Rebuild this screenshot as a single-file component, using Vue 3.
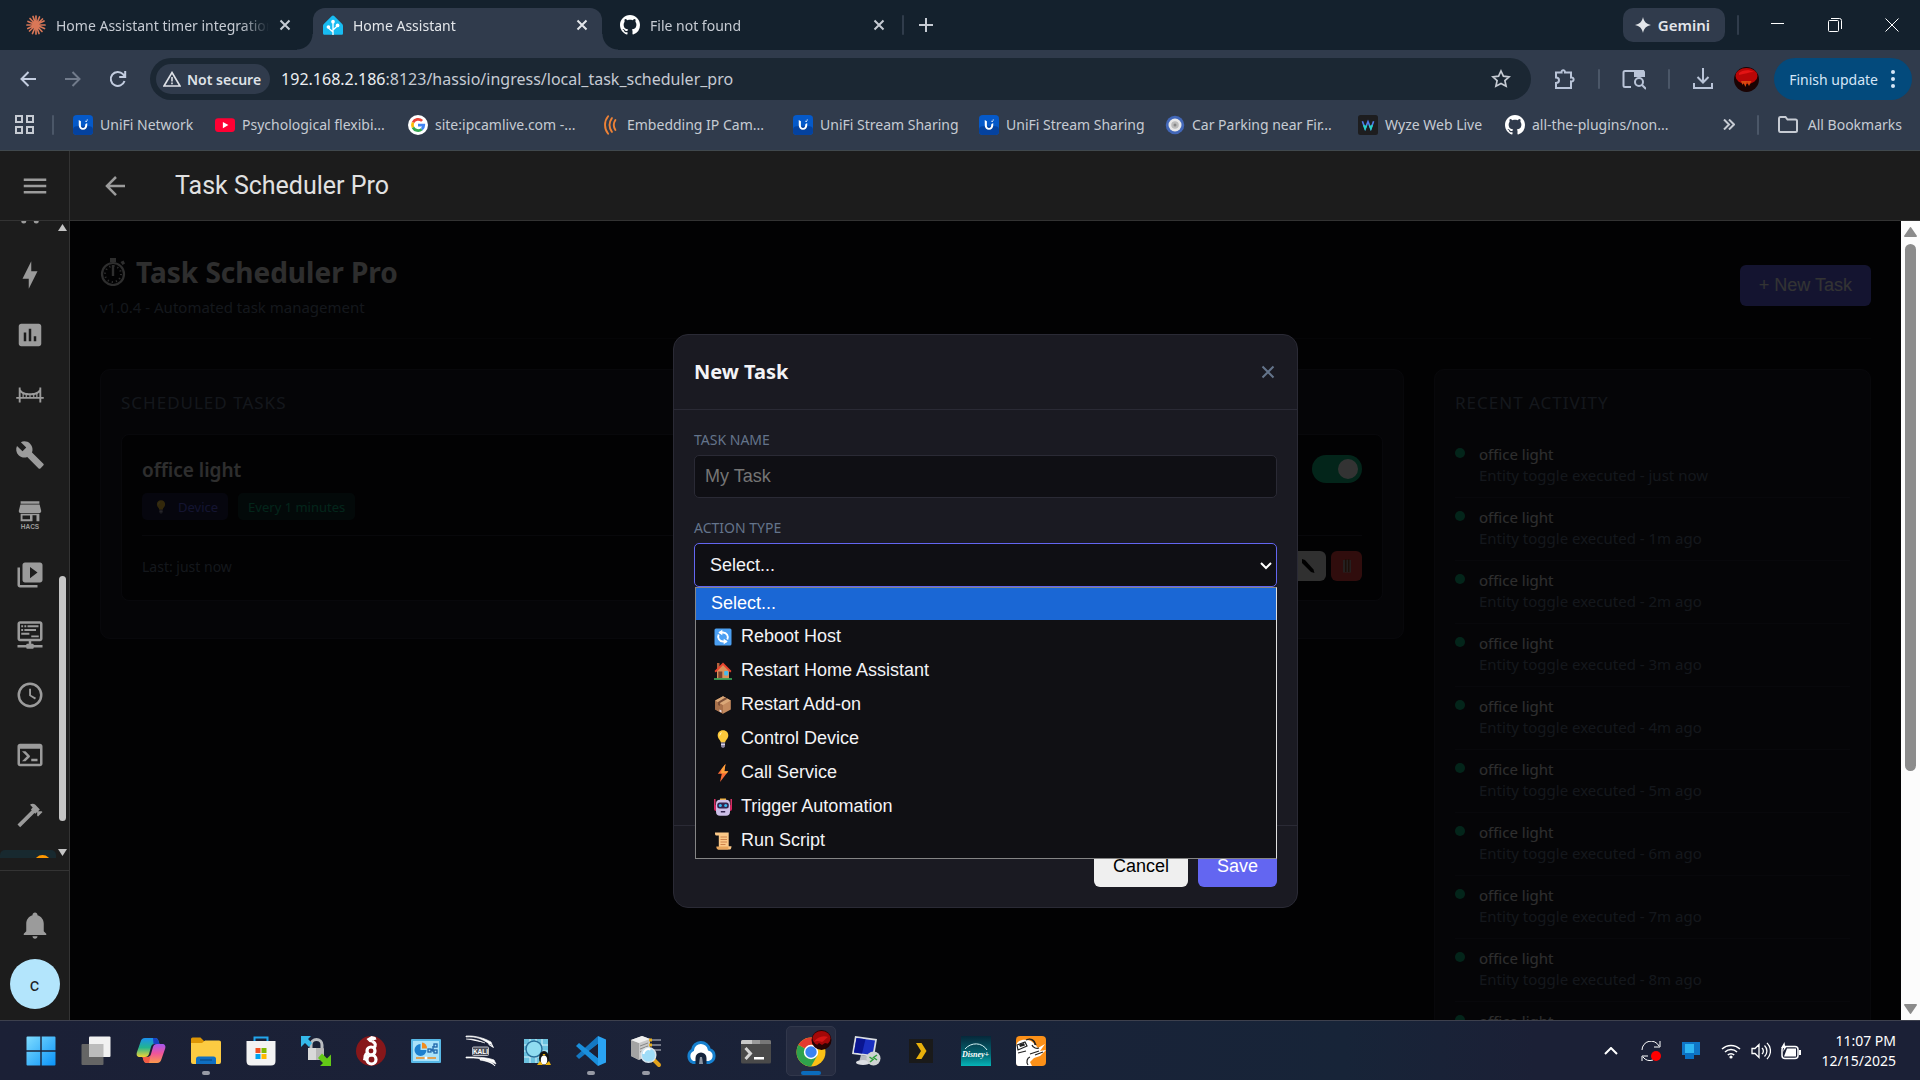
<script setup>
import { ref } from 'vue'

const github = '<path fill="#fff" d="M8 0C3.58 0 0 3.58 0 8c0 3.54 2.29 6.53 5.47 7.59.4.07.55-.17.55-.38 0-.19-.01-.82-.01-1.49-2.01.37-2.53-.49-2.69-.94-.09-.23-.48-.94-.82-1.13-.28-.15-.68-.52-.01-.53.63-.01 1.08.58 1.23.82.72 1.21 1.87.87 2.33.66.07-.52.28-.87.51-1.07-1.78-.2-3.64-.89-3.64-3.95 0-.87.31-1.59.82-2.15-.08-.2-.36-1.02.08-2.12 0 0 .67-.21 2.2.82.64-.18 1.32-.27 2-.27.68 0 1.36.09 2 .27 1.53-1.04 2.2-.82 2.2-.82.44 1.1.16 1.92.08 2.12.51.56.82 1.27.82 2.15 0 3.07-1.87 3.75-3.65 3.95.29.25.54.73.54 1.48 0 1.07-.01 1.93-.01 2.2 0 .21.15.46.55.38A8.013 8.013 0 0 0 16 8c0-4.42-3.58-8-8-8z"/>'
const unifi = '<rect width="16" height="16" rx="3" fill="#0559c9"/><rect y="9" width="16" height="7" rx="3" fill="#04429f"/><path d="M4.6 4v4.2c0 2.2 1.4 3.6 3.4 3.6s3.4-1.4 3.4-3.6V6.6c-1.3.2-1.7.9-1.7 2 0 1-.6 1.7-1.7 1.7S6.3 9.500 6.300 8.300V5z" fill="#fff"/><path d="M10 4.500h1v1h-1zM11 3.500h.8v.8H11z" fill="#fff"/>'

const tabs = [
    { title: 'Home Assistant timer integration', view: '0 0 20 20', icon: '<g stroke="#d97757" stroke-width="1.700" stroke-linecap="round"><path d="M10 1v18M1 10h18M4 3.500l12 13M16.500 4l-13 12M7 1.500l6 17M13.500 2l-7 16.500M2 6.500l16.500 7M18 6L1.800 13.500"/></g>' },
    { title: 'Home Assistant', active: true, view: '0 0 24 24', icon: '<path fill="#18bcf2" d="M12 0.500c.5 0 1 .2 1.400.6L23 10.800c.5.500 1 1.500 1 2.300v9c0 1-.7 1.700-1.700 1.700H1.700C.7 23.800 0 23 0 22v-9c0-.8.5-1.800 1-2.300l9.600-9.600c.4-.4.9-.6 1.400-.6z"/><g fill="none" stroke="#fff" stroke-width="1.600"><path d="M12 24V9M12 20.500l-5.500-5M12 18l5.500-5"/></g><circle cx="12" cy="8" r="2.200" fill="#fff"/><circle cx="6.500" cy="14.500" r="2.200" fill="#fff"/><circle cx="17.500" cy="12.500" r="2.200" fill="#fff"/>' },
    { title: 'File not found', view: '0 0 16 16', icon: github }
]

const bookmarks = [
    { title: 'UniFi Network', w: 142, icon: unifi },
    { title: 'Psychological flexibi...', w: 193, icon: '<rect y="2.500" width="16" height="11" rx="2.500" fill="#ff0033"/><path d="M6.300 5.500v5L10.700 8z" fill="#fff"/>' },
    { title: 'site:ipcamlive.com -...', w: 192, icon: '<circle cx="8" cy="8" r="8" fill="#fff"/><g fill="none" stroke-width="2.200"><path stroke="#ea4335" d="M4 6a4.600 4.600 0 0 1 7.300-1.300"/><path stroke="#fbbc05" d="M4 10a4.600 4.600 0 0 1 0-4"/><path stroke="#34a853" d="M11 11.400A4.600 4.600 0 0 1 4 10"/><path stroke="#4285f4" d="M8 8h4.600c0 1.500-.6 2.700-1.600 3.400"/></g>' },
    { title: 'Embedding IP Cam...', w: 193, icon: '<g fill="none" stroke="#ee8236" stroke-width="1.500" stroke-linecap="round"><path d="M6.500 1C3.200 5 3.200 11 6.500 15M9.500 2.500c-2.400 3.500-2.400 7.500 0 11M12.300 4c-1.600 2.500-1.600 5.500 0 8"/></g>' },
    { title: 'UniFi Stream Sharing', w: 186, icon: unifi },
    { title: 'UniFi Stream Sharing', w: 186, icon: unifi },
    { title: 'Car Parking near Fir...', w: 193, icon: '<circle cx="8" cy="8" r="7.400" fill="#4267b8"/><circle cx="8" cy="8" r="5.200" fill="#e8e8e8"/><circle cx="8" cy="8" r="3" fill="#bcbcbc"/><circle cx="8" cy="8" r="1.200" fill="#888"/>' },
    { title: 'Wyze Web Live', w: 147, icon: '<rect width="16" height="16" rx="2" fill="#1d1d1f"/><path d="M3.500 5l2.200 6L8 5.300 10.300 11l2.200-6" fill="none" stroke="#4f7bea" stroke-width="1.300"/><path d="M4.600 8l1.100 3 1.100-2.800M9.200 8.200l1.100 2.800 1.100-3" fill="none" stroke="#25d3c4" stroke-width="1.300"/>' },
    { title: 'all-the-plugins/non...', w: 180, icon: github }
]

const navItems = [
    '<path d="M17 18a2 2 0 1 0 0 4 2 2 0 0 0 0-4M7 18a2 2 0 1 0 0 4 2 2 0 0 0 0-4M1 2v2h2l3.600 7.600-1.400 2.400C4.500 15.300 5.500 17 7 17h12v-2H7.400l1.100-2h7.500L21 4H5.200l-.9-2z"/>',
    '<path d="M11 15H6L13 1V9H18L11 23V15Z"/>',
    '<path d="M9 17H7V10H9V17M13 17H11V7H13V17M17 17H15V13H17V17M19 3H5C3.9 3 3 3.9 3 5V19C3 20.1 3.9 21 5 21H19C20.1 21 21 20.1 21 19V5C21 3.9 20.1 3 19 3"/>',
    '<path d="M3 6h1.500v1.500C6 10 9 10.500 12 10.500s6-.5 7.500-3V6H21v7.500h2V15h-2v3h-1.500v-3h-15v3H3v-3H1v-1.500h2zM4.500 10v3.500H6V11.200zM7 11.600v1.900h1.500V12zM9.500 12.100v1.400h2v-1.400zM12.500 12.100v1.400h2v-1.400zM15.500 12v1.500H17v-1.900zM18 11.200v2.300h1.500V10z" fill-rule="evenodd"/>',
    '<path d="M22.7 19L13.6 9.9C14.5 7.6 14 4.9 12.1 3C10.1 1 7.1 .6 4.7 1.7L9 6L6 9L1.6 4.7C.4 7.1 .9 10.1 2.9 12.1C4.8 14 7.5 14.5 9.8 13.6L18.9 22.7C19.3 23.1 19.9 23.1 20.3 22.7L22.6 20.4C23.1 20 23.1 19.3 22.7 19Z"/>',
    '<path d="M4.500 1h15v2h-15zM4.300 3.600h15.400l1.300 5.200c0 1-.8 1.700-1.500 1.700h-15c-.8 0-1.500-.7-1.500-1.700zM4.500 11h15v6h-2.300v-4.800h-3.200V17H4.500zM6 12.300v3h6v-3z" fill-rule="evenodd"/><text x="12" y="22.800" font-size="5.200" font-weight="700" text-anchor="middle" font-family="Liberation Sans, sans-serif">HACS</text>',
    '<path d="M4 6H2V20C2 21.11 2.9 22 4 22H18V20H4V6M20 2H8C6.9 2 6 2.9 6 4V16C6 17.1 6.9 18 8 18H20C21.1 18 22 17.1 22 16V4C22 2.9 21.1 2 20 2M12 14.500V5.500L18 10L12 14.500Z"/>',
    '<path d="M4 1h16c1.100 0 2 .9 2 2v12c0 1.100-.9 2-2 2h-7v2h1c.6 0 1 .4 1 1h7v2h-7c0 .6-.4 1-1 1h-4c-.6 0-1-.4-1-1H2v-2h7c0-.6.4-1 1-1h1v-2H4c-1.100 0-2-.9-2-2V3c0-1.100.9-2 2-2M4 3v12h16V3zM5 4.200h1.500v1.500H5zM7.500 4.200H9v1.500H7.500zM10 4.200h8.800v1.500H10zM5 7.200h1.500v1.500H5zM7.500 7.200h9.300v1.500H7.500zM5 10.200h6.500v1.500H5zM13 12.300h6v1.500h-6z" fill-rule="evenodd"/>',
    '<path d="M12 2a10 10 0 1 0 0 20 10 10 0 0 0 0-20m0 2a8 8 0 1 1 0 16 8 8 0 0 1 0-16m-.7 3v5.600l4.700 2.900.8-1.300-4-2.300V7z"/>',
    '<path d="M20 19V7H4V19H20M20 3C21.11 3 22 3.9 22 5V19C22 20.11 21.11 21 20 21H4C2.9 21 2 20.1 2 19V5C2 3.89 2.9 3 4 3H20M13 17V15H18V17H13M9.58 13L5.57 9H8.4L11.7 12.3C12.09 12.69 12.09 13.33 11.7 13.72L8.42 17H5.59L9.58 13Z"/>',
    '<path d="M2 19.63L13.43 8.2L12.72 7.5L14.14 6.07L12 3.89C13.2 2.7 15.09 2.7 16.27 3.89L19.87 7.5L18.45 8.91H21.29L22 9.62L18.45 13.21L17.74 12.5V9.62L16.27 11.04L15.56 10.33L4.13 21.76L2 19.63Z"/>'
]

const bulb = '<path d="M9 .3C5.600.300 3.700 2.700 3.700 5.500c0 3.200 2.800 4.500 3.100 7h4.400c.3-2.500 3.100-3.800 3.100-7C14.300 2.700 12.400.300 9 .3z" fill="#fcc93b"/><path d="M8 2C6 2.500 5.200 4.500 5.700 6.300 6.500 5 7 3.500 8 2z" fill="#fff6c4"/><path d="M7 12.500h4v3.700c0 .8-1 1.500-2 1.500s-2-.7-2-1.500z" fill="#8c86a3"/><path d="M7 14h4v1H7z" fill="#d6d1e6"/>'

const options = [
    { label: 'Reboot Host', icon: '<rect x=".5" y=".5" width="17" height="17" rx="1.500" fill="#4b9ff2"/><path d="M13.300 11.500A4.800 4.800 0 0 0 9 4.500H5.500M4.700 6.500A4.800 4.800 0 0 0 9 13.500h3.500" fill="none" stroke="#fff" stroke-width="1.900"/><path d="M8.300 1.800v5.400L4.300 4.500zM9.700 10.800v5.400l4-2.700z" fill="#fff"/>' },
    { label: 'Restart Home Assistant', icon: '<path d="M3 1h2.500v6H3z" fill="#b5603c"/><path d="M3 8l6-6 6 6v8.500H3z" fill="#d9925a"/><path d="M.5 9L9 .5 17.500 9l-1.300 1.400L9 3.300l-7.200 7.100z" fill="#e8442e"/><rect x="4.300" y="9.500" width="4" height="7" fill="#7a4030"/><rect x="10.200" y="9" width="4" height="4.500" rx="1" fill="#45b9ee"/><rect y="16.200" width="18" height="1.600" fill="#3fae5c"/>' },
    { label: 'Restart Add-on', icon: '<path d="M9 .3l7.800 4.200v9L9 17.700l-7.800-4.200v-9z" fill="#c48a5e"/><path d="M9 9v8.700l-7.800-4.200v-9z" fill="#a8704a"/><path d="M9 .3l7.800 4.200L9 9 1.200 4.500z" fill="#dba878"/><path d="M11.300 1.600L4 6v3l2 1V7l7.500-4.200z" fill="#7d5038"/><path d="M5.500 13.500l2 1v2l-2-1z" fill="#e8e0ee"/>' },
    { label: 'Control Device', icon: bulb },
    { label: 'Call Service', icon: '<path d="M11.500 0L3.800 9.700h4L6 18l8.300-10.700h-4z" fill="#f96b35"/><path d="M11.500 0L7.600 5 7 9.200h5.800l1.500-1.900h-4z" fill="#fca23a"/>' },
    { label: 'Trigger Automation', icon: '<path d="M.8 1v10M17.200 1v10" stroke="#e8356d" stroke-width="1.400"/><rect x="0" y="7" width="18" height="6" rx="2" fill="#d3235e"/><path d="M6 .5h6v2H6z" fill="#f5b32e"/><rect x="2" y="1.800" width="14" height="16" rx="4" fill="#cdbfe8"/><rect x="3.200" y="4.500" width="11.600" height="6" rx="2.500" fill="#33244f"/><circle cx="6.300" cy="7.500" r="1.500" fill="#38b8f2"/><circle cx="11.700" cy="7.500" r="1.500" fill="#38b8f2"/><path d="M6.800 13h4.400v1.500H6.800z" fill="#33244f"/>' },
    { label: 'Run Script', icon: '<path d="M1 .5h13.700v13.700H17.500c0 2-.8 3.400-2 3.400H3.800c1-.5 1-1.500 1-2.500V3.500H2.200C1.200 3.500.8 2 1 .5z" fill="#fbc888"/><path d="M4 17.600c-1 0-1.800-1.400-1.600-3h12v3z" fill="#e8a55c"/><path d="M6.500 5h6.500M6.500 7.500h6.500M6.500 10h6.500M6.500 12.500h5" stroke="#c77a45" stroke-width=".9"/>' }
]

const activity = ['just now', '1m ago', '2m ago', '3m ago', '4m ago', '5m ago', '6m ago', '7m ago', '8m ago', '9m ago']

const chromeArt = '<g transform="translate(0 1)"><circle cx="15" cy="15" r="14.500" fill="#fbc116"/><path d="M15 15L2.450 7.750A14.500 14.500 0 0 0 15 29.500l6.300-10.900z" fill="#2fa24c"/><path d="M2.450 7.750A14.500 14.500 0 0 1 27.550 7.750H15v7z" fill="#e33b2e"/><circle cx="15" cy="15" r="7.200" fill="#fff"/><circle cx="15" cy="15" r="5.700" fill="#3b82f0"/></g><circle cx="25.500" cy="4" r="10" fill="#240303"/><ellipse cx="25.500" cy="2.500" rx="9" ry="7.500" fill="#a30808"/><path d="M18 6c3-5 9-7 14-5-3 2-5 5-6 5s-4-2-8 0z" fill="#d41414"/><path d="M18 8l3 1 2-2 3 2 3-2 4 1-3 4H20z" fill="#2b0303"/>'

const dock = [
    { name: 'Start', art: '<defs><linearGradient id="win" x1="0" y1="0" x2="1" y2="1"><stop offset="0" stop-color="#7fdcff"/><stop offset="1" stop-color="#0a93f8"/></linearGradient></defs><path fill="url(#win)" d="M.500 1.500q0-1 1-1h12.800v13.800H.500zM15.700.500h12.800q1 0 1 1v12.800H15.700zM.500 15.700h13.800v13.800H1.500q-1 0-1-1zM15.700 15.700h13.800v12.800q0 1-1 1H15.700z"/>' },
    { name: 'Task View', art: '<rect x=".5" y="8" width="22" height="21" rx="1" fill="#656565"/><rect x="8" y=".5" width="21.500" height="20.500" rx="1" fill="#f1f1f1"/><path d="M8 8h14.500v13H8z" fill="#bcbcbc"/>' },
    { name: 'Copilot', art: '<defs><linearGradient id="cpa" x1="0" y1="0" x2="0" y2="1"><stop offset="0" stop-color="#1b8ff0"/><stop offset=".5" stop-color="#22b58f"/><stop offset="1" stop-color="#f2d435"/></linearGradient><linearGradient id="cpb" x1="0" y1="0" x2="0" y2="1"><stop offset="0" stop-color="#a457f0"/><stop offset=".5" stop-color="#f0559a"/><stop offset="1" stop-color="#fb9a4b"/></linearGradient></defs><path d="M9 2h10c2 0 3 1.200 3.500 3l1 3h-5c-2 0-3 1-3.500 3l-2 7c-.6 2-2 3-4 3H4c-3 0-4-2-3-5L4.500 6C5.200 3.500 6.500 2 9 2z" fill="url(#cpa)"/><path d="M17 2h2c2 0 3 1.200 3.500 3l1 3h-6z" fill="#1842c4"/><path d="M21 27H11c-2 0-3-1.200-3.500-3l-1-3h5c2 0 3-1 3.500-3l2-7c.6-2 2-3 4-3h5c3 0 4 2 3 5l-3.500 10C24.800 25.500 23.500 27 21 27z" fill="url(#cpb)"/><path d="M6.500 21h5c1.500 0 2.500-.6 3-1.500L13 27h-2c-2 0-3-1.200-3.500-3z" fill="#f25b45"/>' },
    { name: 'File Explorer', run: true, art: '<path d="M0 3q0-1.500 1.500-1.500h8L13 5h15q2 0 2 2v3H0z" fill="#dd9505"/><path d="M0 7h11l3-2.500h14q2 0 2 2V26q0 2-2 2H2q-2 0-2-2z" fill="#fccb42"/><path d="M5 28v-5q0-2.500 2.500-2.500h15Q25 20.500 25 23v5z" fill="#0f6fc2"/><path d="M9 24h12" stroke="#0a4a87" stroke-width="1.200"/>' },
    { name: 'Store', art: '<path d="M8.500 7V1.500h13V7" fill="none" stroke="#22a5ec" stroke-width="2"/><path d="M.5 5h29v20q0 4.500-4.500 4.500H5Q.500 29.500.500 25z" fill="#f3f3f3"/><path d="M9.500 12h5v5h-5z" fill="#f25022"/><path d="M15.500 12h5v5h-5z" fill="#7fba00"/><path d="M9.500 18h5v5h-5z" fill="#00a4ef"/><path d="M15.500 18h5v5h-5z" fill="#ffb900"/>' },
    { name: 'Remote Lock', art: '<path d="M10 14V9a5 5 0 0 1 11 0v5" fill="none" stroke="#b9bcc0" stroke-width="3"/><rect x="7" y="12" width="16" height="12" rx="1" fill="#b7b7b7"/><path d="M7 12h8v12H7z" fill="#d9d9d9"/><path d="M0 0h10L7 3l4 4-3 4-4-4-4 4z" fill="#35b9ea"/><path d="M30 30H19l3-3-5-5 4-4.500 5 5 4-4z" fill="#63c916"/>' },
    { name: 'WireGuard', art: '<circle cx="15" cy="15" r="15" fill="#87171a"/><g fill="none" stroke="#fff" stroke-width="3.200"><circle cx="15.500" cy="23.500" r="4.500"/><path d="M11 24c-3-3-2-6 1-7"/><circle cx="15" cy="15" r="4"/><path d="M17.500 12c3-2.500 2-5-1-6.500"/></g><path d="M10.500 3l5-3 4 1 1 2.500-4 1 1 2.500-4-1zM8 19l-1 5 4 1z" fill="#fff"/>' },
    { name: 'Control Panel', art: '<rect y="3" width="30" height="24" rx="1" fill="#58b8e6"/><rect x="2" y="5" width="26" height="20" fill="#a9e2fa"/><path d="M9.500 8a6 6 0 1 0 6 6h-6z" fill="#1c80cf"/><path d="M11 6.500v6h5a5.500 5.500 0 0 0-5-6z" fill="#f28c1e"/><g fill="none" stroke="#1b62a8" stroke-width="1.300"><rect x="17" y="13" width="3" height="3"/><rect x="23" y="8" width="3" height="3"/><rect x="23" y="14" width="3" height="3"/><path d="M20 14h2M22 10v6"/></g><path d="M5 22h20" stroke="#f28c1e" stroke-width="1.500"/><circle cx="15" cy="22" r="1.500" fill="#fff"/>' },
    { name: 'Kali', art: '<path d="M0 1c10-1 18 2 27 10l-2-5C18 2 9-.5 0 0zM0 3c8-.3 14 2 19 4M25 8l2.500 3.500-5-3M0 22c10-.5 20 .5 30 6l-2-4C20 21 9 21 0 21zM14 24c7 1 12 3 15 6-2-4-8-6-15-7z" fill="#fff" stroke="#fff" stroke-width=".7"/><rect x="6.500" y="11" width="16" height="8.500" rx="1" fill="#4c4f59" stroke="#b9bcc5"/><text x="14.500" y="17.700" fill="#fff" font-size="6.500" font-weight="700" text-anchor="middle" font-family="Liberation Sans, sans-serif">KALI</text>' },
    { name: 'WSL', art: '<path d="M3 3h24v24H3z" fill="#6cc2df"/><path d="M3 9h24M3 15h24M3 21h24M9 3v24M15 3v24M21 3v24" stroke="#d5f2fb" stroke-width="1"/><circle cx="13" cy="13" r="8" fill="#8fdcf1" stroke="#276f9a" stroke-width="1.500"/><ellipse cx="23" cy="22" rx="5" ry="7" fill="#131313"/><ellipse cx="23" cy="24" rx="3.200" ry="4.500" fill="#fff"/><path d="M16 29l3-4 3 4zM24 29l4-4 2 4zM21.500 18h3l-1.500 2z" fill="#f0b40c"/>' },
    { name: 'Visual Studio Code', run: true, art: '<path d="M22 0l8 3.500v23L22 30z" fill="#2aa3f2"/><path d="M22 0L0 20l3 3L22 8z" fill="#1478c2"/><path d="M22 30L0 10l3-3 19 15z" fill="#1a8fdc"/><path d="M22 8v14l-9-7z" fill="#1b2136"/>' },
    { name: 'PuTTY', run: true, art: '<path d="M0 4l11-4 8 3v16L8 24l-8-4z" fill="#c9c9c9"/><path d="M0 4l8 3v17l-8-4z" fill="#a3a3a3"/><path d="M0 4l11-4 8 3L8 7z" fill="#efefef"/><path d="M9 10l8-3M9 13l8-3M9 16l8-3" stroke="#888"/><path d="M19 4h11M19 9h11M21 14h9" stroke="#c9ccd2" stroke-width="1.200"/><path d="M18 2.500h3v3h-3zM18 7.500h3v3h-3z" fill="#e8b021"/><path d="M23 24l5 5" stroke="#e3a21b" stroke-width="4" stroke-linecap="round"/><circle cx="17.500" cy="19" r="7.300" fill="#9fdcf7" stroke="#d8e4ec" stroke-width="1.500"/><path d="M12.500 18a5 5 0 0 1 7-4.500" fill="none" stroke="#fff" stroke-width="2"/>' },
    { name: 'Cloud VPN', art: '<path d="M7 26.500a7 7 0 0 1-.5-12.500 8.500 8.500 0 0 1 16.800-.6A6.800 6.800 0 0 1 23 26.500z" fill="#fff" stroke="#1680cf" stroke-width="3"/><path d="M9.500 28v-6a5.500 5.500 0 0 1 11 0v6z" fill="#14233b"/><path d="M13 28l1-7h2l1 7z" fill="#8b93a0"/>' },
    { name: 'Terminal', art: '<rect y="4" width="30" height="23.500" rx="1.500" fill="#4a4a4a"/><path d="M0 5.500Q0 4 1.500 4H11v4H0z" fill="#c9c9c9"/><path d="M11 4h8v4h-8z" fill="#999"/><path d="M19 4h9.500Q30 4 30 5.500V8H19z" fill="#777"/><path d="M4.500 12l5 5.500-5 5.500" fill="none" stroke="#d5d5d5" stroke-width="3"/><path d="M13 21h10v2.500H13z" fill="#fff"/>' },
    { name: 'Chrome', active: true, art: chromeArt },
    { name: 'Remote Desktop', art: '<path d="M4 0l22 3-3 18L1 18z" fill="#d9dde2"/><path d="M5.500 2l18.500 2.500-2.500 14.500L3 16.500z" fill="#1a2fc0"/><path d="M5.500 2l9 1.200L11 17.500l-8-1z" fill="#0a1590"/><path d="M10 19l6 1 1 6H8z" fill="#b6bac1"/><ellipse cx="12" cy="26.500" rx="7" ry="2.500" fill="#dcdfe4"/><circle cx="22.500" cy="22.500" r="7" fill="#cfd3d2"/><path d="M18.500 21l3.500 2.500-3 2.500M26 19l-3.500 2.500L26 24" fill="none" stroke="#2f9e3a" stroke-width="1.500"/>' },
    { name: 'Plex', art: '<path d="M3 3h24v24H3z" fill="#1a1a1a"/><path d="M10 7h5.500l5 8-5 8H10l5-8z" fill="#e8b00b"/>' },
    { name: 'Disney+', art: '<defs><linearGradient id="dis" x1="0" y1="0" x2="0" y2="1"><stop offset="0" stop-color="#06283a"/><stop offset=".6" stop-color="#036672"/><stop offset="1" stop-color="#05b4b8"/></linearGradient></defs><path d="M0 0h30v30H0z" fill="url(#dis)"/><path d="M4 13C10 6 21 6 26 14" fill="none" stroke="#d6f3f5"/><text x="14.500" y="21" fill="#fff" font-size="8" font-style="italic" font-weight="700" text-anchor="middle" font-family="Liberation Serif, serif">Disney+</text>' },
    { name: 'Tiger', art: '<rect width="30" height="30" rx="4" fill="#fb9018"/><path d="M0 11C0 4 8 2 15 5c3 2 5 5 7 7l7-4-5 7 6-1-6 6-6 2-4 4 2 4H3q-3 0-3-3z" fill="#fff"/><path d="M1 9l8-3 2 4-9 4zM10 4c5-2 9 0 10 5M13 3c4 1 6 3 6 6M16 9c1 3 5 4 7 3M23 15l-9 3M27 16l-8 3M14 21c-3 1-4 5-2 8M2 17l8-2" fill="none" stroke="#222" stroke-width="1.200"/><path d="M3 8.500l5-1.500 1 2.500-5 1.500z" fill="#222"/>' }
]

const taskName = ref('')
const actionType = ref('')
const enabled = ref(true)
</script>

<template>
    <div class="screen">
        <header class="browser">
            <div class="tab-strip">
                <div v-for="tab in tabs" :key="tab.title" class="tab" :class="{ 'active-tab': tab.active }">
                    <svg class="favicon" :viewBox="tab.view" v-html="tab.icon"></svg>
                    <span class="tab-title">{{ tab.title }}</span>
                    <button class="tab-close" :aria-label="'Close ' + tab.title">
                        <svg width="12" height="12" viewBox="0 0 12 12"><path d="M1.500 1.500l9 9M10.500 1.500l-9 9" /></svg>
                    </button>
                </div>
                <i class="sep"></i>
                <button class="new-tab" aria-label="New tab">
                    <svg width="14" height="14" viewBox="0 0 14 14"><path d="M7 0v14M0 7h14" /></svg>
                </button>
                <div class="window-side">
                    <button class="gemini">
                        <svg width="16" height="16" viewBox="0 0 16 16"><path d="M8 0c.8 4.500 3.500 7.200 8 8-4.500.8-7.200 3.500-8 8-.8-4.500-3.500-7.200-8-8 4.500-.8 7.200-3.500 8-8z" /></svg>
                        Gemini
                    </button>
                    <i class="sep"></i>
                    <div class="window-controls">
                        <button aria-label="Minimize"><svg width="14" height="14" viewBox="0 0 14 14"><path d="M0 5.500h13" /></svg></button>
                        <button aria-label="Restore"><svg width="14" height="14" viewBox="0 0 14 14"><path d="M.5 3.500q0-1 1-1h8q1 0 1 1v9q0 1-1 1h-8q-1 0-1-1zM3 .500h8.500q2 0 2 2V11" /></svg></button>
                        <button aria-label="Close"><svg width="14" height="14" viewBox="0 0 14 14"><path d="M.5.500l13 13M13.500.500l-13 13" /></svg></button>
                    </div>
                </div>
            </div>

            <div class="toolbar">
                <div class="nav-buttons">
                    <button aria-label="Back"><svg width="16" height="16" viewBox="0 0 16 16"><path d="M16 8H2M8.500 1L1.500 8l7 7" /></svg></button>
                    <button aria-label="Forward" class="muted"><svg width="16" height="16" viewBox="0 0 16 16"><path d="M0 8h14M7.500 1l7 7-7 7" /></svg></button>
                    <button aria-label="Reload"><svg width="18" height="18" viewBox="0 0 18 18"><path d="M15.500 11A7 7 0 1 1 14 4.200l2 2M16.200 1v6h-6" /></svg></button>
                </div>
                <div class="omnibox">
                    <button class="chip">
                        <svg width="18" height="16" viewBox="0 0 18 16"><path d="M9 1.500L17 15H1zM9 6v4.500M9 11.500v1.800" /></svg>
                        Not secure
                    </button>
                    <div class="url"><b>192.168.2.186</b>:8123/hassio/ingress/local_task_scheduler_pro</div>
                    <button class="star" aria-label="Bookmark this page"><svg width="20" height="20" viewBox="0 0 20 20"><path d="M10 2l2.400 5.200 5.700.6-4.200 3.800 1.200 5.600L10 14.400l-5.100 2.800 1.200-5.600-4.200-3.800 5.700-.6z" /></svg></button>
                </div>
                <div class="toolbar-actions">
                    <button aria-label="Extensions"><svg width="22" height="22" viewBox="0 0 22 22"><path d="M2 4.500h5.500c-.6-3 4-3 3.500 0h6V9.500c3.500-.5 3.500 4.500 0 4V20H2v-5c4 0 4-5.500 0-5.500z" /></svg></button>
                    <i class="sep"></i>
                    <button aria-label="Lens"><svg width="24" height="22" viewBox="0 0 24 22"><path d="M9 19H3q-1.500 0-1.500-1.500v-13Q1.500 3 3 3h17.500q1.500 0 1.500 1.500V9" /><path d="M13 3h8v5h-8z" fill="currentColor" /><circle cx="17" cy="14" r="4" /><path d="M20 17l4 4" /></svg></button>
                    <i class="sep"></i>
                    <button aria-label="Downloads"><svg width="22" height="22" viewBox="0 0 22 22"><path d="M11 0v14M5.500 9l5.500 5.500L16.500 9M2 15v5h18v-5" /></svg></button>
                    <button class="profile" aria-label="Profile">
                        <svg width="25" height="25" viewBox="0 0 25 25"><circle cx="12.500" cy="12.500" r="12.500" fill="#1a0303" /><ellipse cx="12.500" cy="9" rx="11" ry="8" fill="#b80606" /><path d="M5 6c3-3 10-4 15-1-5 0-9 2-15 3z" fill="#e31414" /><path d="M7 14l1.500 4 1-2 2 4 1.500-5 2 4 1.500-3 1-2z" fill="#d9480f" /></svg>
                    </button>
                    <button class="update">Finish update<svg width="4" height="18" viewBox="0 0 4 18"><circle cx="2" cy="2" r="2" /><circle cx="2" cy="9" r="2" /><circle cx="2" cy="16" r="2" /></svg></button>
                </div>
            </div>

            <nav class="bookmarks">
                <button class="apps" aria-label="Apps"><svg width="19" height="19" viewBox="0 0 19 19"><path d="M1 1h6v6H1zM12 1h6v6h-6zM1 12h6v6H1zM12 12h6v6h-6z" /></svg></button>
                <i class="sep"></i>
                <div class="bookmark-list">
                    <a v-for="(b, i) in bookmarks" :key="i" href="#" :style="{ width: b.w + 'px' }">
                        <svg class="favicon" viewBox="0 0 16 16" v-html="b.icon"></svg><span>{{ b.title }}</span>
                    </a>
                </div>
                <button class="more" aria-label="More bookmarks"><svg width="12" height="11" viewBox="0 0 12 11"><path d="M1 .5l5 5-5 5M6 .500l5 5-5 5" /></svg></button>
                <i class="sep"></i>
                <a href="#" class="all"><svg width="20" height="17" viewBox="0 0 20 17"><path d="M1 2.500Q1 1 2.500 1h5l2 2.500h8Q19 3.500 19 5v9.500q0 1.500-1.500 1.500h-15Q1 16 1 14.500z" /></svg>All Bookmarks</a>
            </nav>
        </header>

        <div class="hass">
            <aside class="sidebar">
                <div class="side-top"><button aria-label="Menu"><svg class="mdi" viewBox="0 0 24 24"><path d="M3 6H21V8H3V6M3 11H21V13H3V11M3 16H21V18H3V16Z" /></svg></button></div>
                <div class="side-scroll">
                    <div class="side-list">
                        <a v-for="(icon, i) in navItems" :key="i" href="#"><svg class="mdi" viewBox="0 0 24 24" v-html="icon"></svg></a>
                        <a href="#" class="selected"><i class="badge"></i></a>
                    </div>
                    <div class="side-bar">
                        <svg width="9" height="7" viewBox="0 0 9 7"><path d="M4.500 0L9 7H0z" /></svg>
                        <i></i>
                        <svg width="9" height="7" viewBox="0 0 9 7"><path d="M0 0h9L4.500 7z" /></svg>
                    </div>
                </div>
                <div class="side-bottom">
                    <button aria-label="Notifications"><svg class="mdi" viewBox="0 0 24 24"><path d="M21 19V20H3V19L5 17V11C5 7.900 7.030 5.170 10 4.290C10 4.190 10 4.100 10 4C10 2.900 10.900 2 12 2S14 2.900 14 4C14 4.100 14 4.190 14 4.290C16.970 5.170 19 7.900 19 11V17L21 19M14 21C14 22.100 13.100 23 12 23S10 22.100 10 21" /></svg></button>
                    <a href="#" class="user">c</a>
                </div>
            </aside>

            <section class="panel">
                <div class="panel-top">
                    <button aria-label="Go back"><svg class="mdi" viewBox="0 0 24 24"><path d="M20 11V13H8L13.500 18.500L12.080 19.920L4.160 12L12.080 4.080L13.500 5.500L8 11H20Z" /></svg></button>
                    <span>Task Scheduler Pro</span>
                </div>
                <div class="frame">
                    <div class="view">
                        <div class="page">
                            <div class="page-head">
                                <div>
                                    <h1>
                                        <svg width="26" height="28" viewBox="0 0 26 28"><circle cx="13" cy="16" r="11" fill="none" stroke="currentColor" stroke-width="2.200" /><circle cx="13" cy="16" r="8" fill="none" stroke="currentColor" stroke-width="2" stroke-dasharray="1.200 3" /><path d="M10 0h6v4h-6zM11.800 7h2.400v11h-2.400zM20.500 4l3-1.500 1.500 3-2.500 1.500z" fill="currentColor" /></svg>
                                        Task Scheduler Pro
                                    </h1>
                                    <p>v1.0.4 - Automated task management</p>
                                </div>
                                <button class="btn primary">+ New Task</button>
                            </div>
                            <div class="columns">
                                <div class="card">
                                    <h2>Scheduled Tasks</h2>
                                    <div class="task">
                                        <div class="task-head">
                                            <div>
                                                <h3>office light</h3>
                                                <div class="tags">
                                                    <span class="tag device"><svg width="14" height="14" viewBox="0 0 18 18" v-html="bulb"></svg>Device</span>
                                                    <span class="tag every">Every 1 minutes</span>
                                                </div>
                                            </div>
                                            <input v-model="enabled" class="toggle" type="checkbox" aria-label="Enable office light" />
                                        </div>
                                        <div class="task-foot">
                                            <span>Last: just now</span>
                                            <div class="task-actions">
                                                <button class="edit" aria-label="Edit"><svg width="14" height="14" viewBox="0 0 14 14"><path d="M1 0l3 1 8.500 9.500 1 3.500-3.500-1L1 4z" fill="#000" /></svg></button>
                                                <button class="remove" aria-label="Delete"><svg width="10" height="14" viewBox="0 0 10 14"><path d="M1 1h8v12.500H1z" fill="#b9a0a0" /><path d="M3 0h1.500v13H3zM6 0h1.500v13H6z" fill="#8a4a2a" /></svg></button>
                                            </div>
                                        </div>
                                    </div>
                                </div>
                                <div class="card recent">
                                    <h2>Recent Activity</h2>
                                    <ul>
                                        <li v-for="time in activity" :key="time">
                                            <i></i>
                                            <div><b>office light</b><span>Entity toggle executed - {{ time }}</span></div>
                                        </li>
                                    </ul>
                                </div>
                            </div>
                        </div>

                        <div class="overlay">
                            <form class="modal" @submit.prevent>
                                <div class="modal-head">
                                    <strong>New Task</strong>
                                    <button type="button" aria-label="Close dialog"><svg width="14" height="14" viewBox="0 0 14 14"><path d="M1.500 1.500l11 11M12.500 1.500l-11 11" /></svg></button>
                                </div>
                                <div class="modal-body">
                                    <div class="field">
                                        <label for="task-name">Task Name</label>
                                        <input id="task-name" v-model="taskName" type="text" placeholder="My Task" />
                                    </div>
                                    <div class="field">
                                        <label for="action-type">Action Type</label>
                                        <div class="select-wrap">
                                            <select id="action-type" v-model="actionType">
                                                <option value="">Select...</option>
                                            </select>
                                            <svg class="caret" width="12" height="8" viewBox="0 0 12 8"><path d="M1 1l5 5 5-5" /></svg>
                                            <ul class="options">
                                                <li class="current">Select...</li>
                                                <li v-for="o in options" :key="o.label"><svg width="18" height="18" viewBox="0 0 18 18" v-html="o.icon"></svg>{{ o.label }}</li>
                                            </ul>
                                        </div>
                                    </div>
                                </div>
                                <div class="modal-foot">
                                    <button type="button" class="btn cancel">Cancel</button>
                                    <button type="submit" class="btn primary">Save</button>
                                </div>
                            </form>
                        </div>
                    </div>
                    <div class="scrollbar">
                        <svg width="13" height="10" viewBox="0 0 13 10"><path d="M6.500 0Q7 0 7.500 1L13 9q0 1-1 1H1Q0 10 0 9L5.500 1Q6 0 6.500 0z" /></svg>
                        <i></i>
                        <svg width="13" height="10" viewBox="0 0 13 10"><path d="M6.500 10Q7 10 7.500 9L13 1q0-1-1-1H1Q0 0 0 1l5.500 8q.5 1 1 1z" /></svg>
                    </div>
                </div>
            </section>
        </div>

        <footer class="taskbar">
            <div class="dock">
                <button v-for="app in dock" :key="app.name" :class="{ running: app.run, focused: app.active }" :aria-label="app.name">
                    <svg viewBox="0 0 30 30" v-html="app.art"></svg>
                </button>
            </div>
            <div class="tray">
                <svg width="14" height="8" viewBox="0 0 14 8"><path d="M1 7l6-6 6 6" stroke-width="2" /></svg>
                <svg class="sync" width="20" height="20" viewBox="0 0 20 20"><path d="M1 9a9 9 0 0 1 17-4M19 0v6h-6M1 20v-5h6M2 16a9 9 0 0 0 10 3" /><circle cx="15" cy="15" r="5" fill="#f00" stroke="none" /></svg>
                <svg class="phone" width="18" height="18" viewBox="0 0 18 18"><path d="M0 0h18v13H0z" fill="#0f75c5" stroke="none" /><path d="M3 2h9v15H3z" fill="#2eb5f2" stroke="none" /><path d="M3 11h9v6H3z" fill="#0870c4" stroke="none" /></svg>
                <svg width="20" height="16" viewBox="0 0 20 16"><path d="M1 6a13 13 0 0 1 18 0M4 9a8.500 8.500 0 0 1 12 0M6.800 12a4.500 4.500 0 0 1 6.400 0" stroke-width="1.500" /><circle cx="10" cy="14" r="1.600" fill="#fff" stroke="none" /></svg>
                <svg width="20" height="18" viewBox="0 0 20 18"><path d="M1 6.500h3l4-4v13l-4-4H1zM11 6a4 4 0 0 1 0 6M13.500 3.500a7.500 7.500 0 0 1 0 11M16 1a11 11 0 0 1 0 16" stroke-width="1.300" /></svg>
                <svg width="21" height="18" viewBox="0 0 21 18"><rect x="1" y="4.500" width="16" height="12" rx="3" stroke-width="1.500" /><path d="M3 14.500l3-8h9v8zM18 8h2v5h-2zM3.500 0L0 6h3L2 10l4-6H4z" fill="#fff" stroke="none" /></svg>
                <div class="clock"><span>11:07 PM</span><span>12/15/2025</span></div>
            </div>
        </footer>
    </div>
</template>

<style>
body {
    margin: 0;
    background: #000;
}
</style>

<style scoped>
* {
    box-sizing: border-box;
}

.screen {
    height: 100vh;
    display: flex;
    flex-direction: column;
    overflow: hidden;
    font-family: "Noto Sans", "Open Sans", sans-serif;
    font-size: 14px;
    color: #c6cbd3;
}

button {
    display: flex;
    align-items: center;
    justify-content: center;
    padding: 0;
    border: 0;
    background: none;
    color: inherit;
    font: inherit;
}

a {
    color: inherit;
    text-decoration: none;
}

svg {
    flex: none;
}

h1, h2, h3, p, ul {
    margin: 0;
    padding: 0;
}

/* browser chrome */
.browser {
    flex: none;
    background: #303b4c;
    border-bottom: 1px solid #40484d;
}

.browser svg:not(.favicon) {
    fill: none;
    stroke: currentColor;
    stroke-width: 2;
}

.sep {
    flex: none;
    width: 2px;
    height: 20px;
    border-radius: 1px;
    background: #4b5768;
}

.tab-strip {
    height: 50px;
    display: flex;
    align-items: center;
    padding-left: 16px;
    background: #14212d;
}

.tab {
    flex: 0 1 289px;
    min-width: 0;
    height: 42px;
    margin: 8px 8px 0 0;
    padding: 0 14px 8px 10px;
    display: flex;
    align-items: center;
    gap: 10px;
}

.active-tab {
    position: relative;
    background: #303b4c;
    border-radius: 12px 12px 0 0;
    color: #e3e6ea;
}

.active-tab::before,
.active-tab::after {
    content: "";
    position: absolute;
    bottom: 0;
    width: 16px;
    height: 16px;
}

.active-tab::before {
    right: 100%;
    background: radial-gradient(circle at 0 0, transparent 15px, #303b4c 16px);
}

.active-tab::after {
    left: 100%;
    background: radial-gradient(circle at 100% 0, transparent 15px, #303b4c 16px);
}

.favicon {
    width: 20px;
    height: 20px;
}

.tab-title {
    flex: 1;
    overflow: hidden;
    white-space: nowrap;
    mask-image: linear-gradient(to right, #000 calc(100% - 28px), transparent);
}

.tab-strip > .sep {
    margin: 0 15px 0 -5px;
    background: #303c4b;
}

.window-side {
    margin-left: auto;
    display: flex;
    align-items: center;
}

.gemini {
    height: 34px;
    padding: 0 15px 0 12px;
    gap: 7px;
    border-radius: 10px;
    background: #303b4c;
    color: #e3e6ea;
    font-size: 15px;
    font-weight: 600;
}

.browser .gemini svg {
    fill: currentColor;
    stroke: none;
}

.window-side .sep {
    margin: 0 10px 0 12px;
    background: #303c4b;
}

.window-controls {
    display: flex;
    color: #fff;
}

.window-controls button {
    width: 57px;
    height: 50px;
}

.browser .window-controls svg {
    stroke-width: 1;
}

.toolbar {
    height: 58px;
    display: flex;
    align-items: center;
}

.nav-buttons {
    display: flex;
    padding-left: 5px;
    color: #c3cde0;
}

.nav-buttons button {
    width: 45px;
    height: 42px;
}

.nav-buttons .muted {
    color: #717b8b;
}

.omnibox {
    flex: 1;
    height: 42px;
    margin-left: 10px;
    padding: 0 20px 0 6px;
    display: flex;
    align-items: center;
    border-radius: 21px;
    background: #1b2733;
}

.chip {
    height: 30px;
    padding: 0 9px 0 7px;
    gap: 6px;
    border-radius: 15px;
    background: #303b4c;
    color: #dfe2e7;
    font-weight: 600;
}

.browser .chip svg {
    stroke-width: 1.6;
}

.url {
    flex: 1;
    margin-left: 11px;
    font-size: 16px;
}

.url b {
    color: #eceef1;
    font-weight: 400;
}

.browser .star svg {
    stroke-width: 1.7;
}

.toolbar-actions {
    display: flex;
    align-items: center;
    padding: 0 8px 0 23px;
    color: #b9c4d8;
}

.toolbar-actions .sep {
    margin: 0 22px;
}

.profile {
    margin: 0 15px 0 20px;
}

.browser .profile svg {
    stroke: none;
}

.update {
    height: 42px;
    padding: 0 17px 0 15px;
    gap: 13px;
    border-radius: 21px;
    background: #034a7c;
    color: #d5e6f7;
}

.browser .update svg {
    fill: currentColor;
    stroke: none;
}

.bookmarks {
    height: 42px;
    padding: 0 18px 9px 15px;
    display: flex;
    align-items: center;
}

.bookmarks > .sep {
    margin: 0 19px 0 18px;
}

.bookmark-list {
    flex: 1;
    min-width: 0;
    display: flex;
    overflow: hidden;
}

.bookmark-list a {
    flex: none;
    display: flex;
    align-items: center;
    gap: 7px;
    white-space: nowrap;
}

.all {
    display: flex;
    align-items: center;
    gap: 10px;
}

.more {
    margin: 0 4px 0 8px;
}

/* home assistant shell */
.hass {
    flex: 1;
    min-height: 0;
    display: flex;
    background: #1c1c1c;
}

.mdi {
    width: 30px;
    height: 30px;
    fill: #9b9b9b;
}

.sidebar {
    flex: none;
    width: 70px;
    display: flex;
    flex-direction: column;
    border-right: 1px solid #333;
}

.side-top {
    height: 70px;
    display: flex;
    align-items: center;
    justify-content: center;
    border-bottom: 1px solid #333;
}

.side-scroll {
    flex: 1;
    min-height: 0;
    display: flex;
    justify-content: space-between;
    margin-bottom: 12px;
    overflow: hidden;
}

.side-list {
    width: 56px;
    margin-top: -35px;
    display: flex;
    flex-direction: column;
    gap: 10px;
}

.side-list a {
    flex: none;
    height: 50px;
    padding-left: 15px;
    display: flex;
    align-items: center;
}

.side-list a:first-child {
    height: 50px;
    margin-bottom: 4px;
}

.side-list .selected {
    align-items: flex-start;
    justify-content: flex-end;
    padding: 5px 5px 0 0;
    border-radius: 5px;
    background: #18292f;
}

.badge {
    width: 17px;
    height: 17px;
    border-radius: 50%;
    background: #ff9800;
}

.side-bar {
    width: 11px;
    padding: 3px 0 2px;
    display: flex;
    flex-direction: column;
    align-items: flex-start;
    fill: #c4c4c4;
}

.side-bar i {
    flex: 0 1 245px;
    width: 7px;
    margin: auto 0 28px 1px;
    border-radius: 4px;
    background: #c4c4c4;
}

.side-bottom {
    flex: none;
    height: 150px;
    padding: 39px 0 11px;
    display: flex;
    flex-direction: column;
    align-items: center;
    gap: 19px;
    border-top: 1px solid #333;
}

.user {
    width: 50px;
    height: 50px;
    display: flex;
    align-items: center;
    justify-content: center;
    border-radius: 50%;
    background: #b3e5fc;
    color: #212121;
    font-family: Roboto, sans-serif;
    font-size: 18px;
}

.panel {
    flex: 1;
    min-width: 0;
    display: flex;
    flex-direction: column;
}

.panel-top {
    flex: none;
    height: 70px;
    padding-left: 30px;
    display: flex;
    align-items: center;
    gap: 45px;
    border-bottom: 1px solid #333;
    color: #e1e1e1;
    font-family: Roboto, sans-serif;
    font-size: 25px;
}

.frame {
    flex: 1;
    min-height: 0;
    display: flex;
}

.view {
    flex: 1;
    min-width: 0;
    position: relative;
    overflow: hidden;
    background: #0a0a0f;
}

.scrollbar {
    width: 19px;
    padding: 6px 0;
    display: flex;
    flex-direction: column;
    align-items: center;
    justify-content: space-between;
    background: #fcfcfc;
    fill: #8b8b8b;
}

.scrollbar i {
    width: 11px;
    height: 67%;
    margin: 7px 0 auto;
    border-radius: 6px;
    background: #8b8b8b;
}

/* scheduler page */
.page {
    padding: 30px;
    color: #e4e4e7;
}

.page-head {
    display: flex;
    align-items: center;
    justify-content: space-between;
    height: 88px;
    margin-bottom: 30px;
    padding-bottom: 18px;
    border-bottom: 1px solid #1c1c26;
}

h1 {
    display: flex;
    align-items: center;
    gap: 10px;
    font-size: 28px;
    line-height: 42px;
    font-weight: 700;
}

.page-head p {
    color: #64748b;
    font-size: 15px;
    line-height: 28px;
}

.btn {
    height: 41px;
    padding: 0 19px;
    border-radius: 6px;
    font-family: "Liberation Sans", Arial, sans-serif;
    font-size: 18px;
}

.primary {
    background: #6366f1;
    color: #fff;
}

.columns {
    display: grid;
    grid-template-columns: 1fr 437px;
    gap: 30px;
    align-items: start;
}

.card {
    padding: 20px;
    border: 1px solid #2a2a3a;
    border-radius: 10px;
    background: #1a1a24;
}

.card > .task {
    margin-bottom: 17px;
}

h2 {
    color: #64748b;
    font-size: 17px;
    line-height: 26px;
    font-weight: 400;
    letter-spacing: 1px;
    text-transform: uppercase;
}

.task {
    margin-top: 18px;
    padding: 19px 20px;
    border: 1px solid #2a2a3a;
    border-radius: 8px;
    background: #0a0a0f;
}

.task-head {
    display: flex;
    justify-content: space-between;
    padding-bottom: 15px;
    border-bottom: 1px solid #2a2a3a;
}

h3 {
    font-size: 19px;
    line-height: 32px;
    font-weight: 600;
}

.tags {
    margin-top: 7px;
    display: flex;
    gap: 10px;
}

.tag {
    height: 27px;
    padding: 0 10px;
    display: flex;
    align-items: center;
    gap: 10px;
    border-radius: 5px;
    font-size: 13px;
}

.device {
    padding-left: 12px;
    background: #1e1f45;
    color: #6366f1;
}

.every {
    background: #132e31;
    color: #10b981;
}

.toggle {
    appearance: none;
    width: 50px;
    height: 28px;
    margin: 1px 0 0;
    padding: 4px;
    display: flex;
    justify-content: flex-end;
    border-radius: 14px;
    background: #10b981;
}

.toggle::before {
    content: "";
    width: 20px;
    height: 20px;
    border-radius: 50%;
    background: #fff;
}

.toggle:not(:checked) {
    justify-content: flex-start;
    background: #2a2a3a;
}

.task-foot {
    padding-top: 15px;
    display: flex;
    align-items: center;
    justify-content: space-between;
    color: #64748b;
}

.task-actions {
    display: flex;
    gap: 5px;
}

.task-actions button {
    width: 36px;
    height: 30px;
    border-radius: 6px;
    background: #efefef;
}

.task-actions .remove {
    width: 31px;
    background: #ef4444;
}

.recent ul {
    margin-top: 19px;
    list-style: none;
}

.recent li {
    height: 63px;
    padding-top: 9px;
    display: flex;
    gap: 14px;
    border-bottom: 1px solid #2a2a3a;
}

.recent i {
    width: 10px;
    height: 10px;
    margin-top: 4px;
    border-radius: 50%;
    background: #10b981;
}

.recent b,
.recent span {
    display: block;
    font-size: 15px;
    line-height: 21px;
    font-weight: 400;
}

.recent span {
    color: #64748b;
}

/* dialog */
.overlay {
    position: absolute;
    inset: 0;
    display: flex;
    align-items: center;
    justify-content: center;
    background: rgba(0, 0, 0, 0.8);
}

.modal {
    width: 625px;
    max-width: 90%;
    border: 1px solid #2a2a35;
    border-radius: 15px;
    background: #1a1a22;
}

.modal-head {
    height: 75px;
    padding: 0 20px;
    display: flex;
    align-items: center;
    justify-content: space-between;
    border-bottom: 1px solid #2a2a35;
    color: #f3f3f6;
    font-size: 20px;
}

.modal-head button {
    width: 18px;
    height: 26px;
    color: #64748b;
}

.modal-head svg,
.caret {
    fill: none;
    stroke: currentColor;
    stroke-width: 2;
}

.modal-body {
    min-height: 415px;
    padding: 20px;
    display: flex;
    flex-direction: column;
    gap: 20px;
}

.field {
    display: flex;
    flex-direction: column;
}

label {
    color: #64748b;
    line-height: 20px;
    margin-bottom: 5px;
    text-transform: uppercase;
}

.field input,
select {
    width: 100%;
    height: 43px;
    padding: 0 10px;
    border: 1px solid #2a2a35;
    border-radius: 5px;
    outline: none;
    background: #0f0f14;
    color: #f3f3f6;
    font-family: "Liberation Sans", Arial, sans-serif;
    font-size: 18px;
}

.field input::placeholder {
    color: #757575;
}

.select-wrap {
    position: relative;
    color: #fff;
}

select {
    appearance: none;
    height: 44px;
    padding: 0 15px;
    border-color: #6366f1;
}

.caret {
    position: absolute;
    top: 19px;
    right: 5px;
}

.options {
    position: absolute;
    top: 44px;
    left: 1px;
    right: 0;
    border: 1px solid #858585;
    border-right-color: #e0e0e0;
    background: #101014;
    color: #f3f3f6;
    font-family: "Liberation Sans", Arial, sans-serif;
    font-size: 18px;
    list-style: none;
}

.options li {
    height: 34px;
    padding-left: 18px;
    display: flex;
    align-items: center;
    gap: 9px;
}

.options .current {
    height: 32px;
    padding-left: 15px;
    background: #1a67d5;
    color: #fff;
}

.modal-foot {
    padding: 20px;
    display: flex;
    justify-content: flex-end;
    gap: 10px;
    border-top: 1px solid #2a2a35;
}

.cancel {
    background: #efefef;
    color: #000;
}

/* windows taskbar */
.taskbar {
    flex: none;
    height: 60px;
    padding: 0 24px 0 16px;
    display: flex;
    align-items: center;
    justify-content: space-between;
    border-top: 1px solid #3d404d;
    background: linear-gradient(to right, #1b2036, #1a2238 45%, #172438 70%, #1b2036 80%);
}

.dock {
    display: flex;
    gap: 5px;
}

.dock button {
    position: relative;
    width: 50px;
    height: 50px;
    border-radius: 5px;
}

.dock button svg {
    width: 30px;
    height: 30px;
    overflow: visible;
}

.dock .focused {
    border: 1px solid #31374b;
    background: #262c41;
}

.dock .running::after,
.dock .focused::after {
    content: "";
    position: absolute;
    bottom: 1px;
    left: 21px;
    width: 8px;
    height: 4px;
    border-radius: 2px;
    background: #979aa5;
}

.dock .focused::after {
    bottom: 0;
    left: 14px;
    width: 20px;
    background: #0b6cbd;
}

.tray {
    display: flex;
    align-items: center;
    gap: 10px;
    color: #fff;
}

.tray > svg {
    fill: none;
    stroke: #fff;
}

.sync,
.phone {
    margin: 0 11px 0 13px;
}

.phone {
    margin-left: 0;
}

.clock {
    margin-left: 10px;
    display: flex;
    flex-direction: column;
    align-items: flex-end;
    line-height: 20px;
}
</style>
